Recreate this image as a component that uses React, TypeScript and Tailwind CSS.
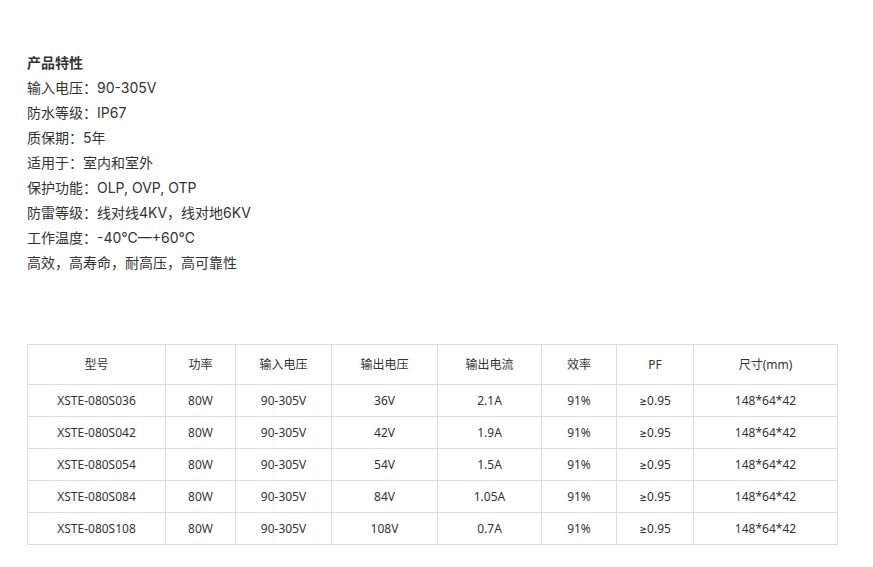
import React from "react";

const lines = [
  "输入电压：90-305V",
  "防水等级：IP67",
  "质保期：5年",
  "适用于：室内和室外",
  "保护功能：OLP, OVP, OTP",
  "防雷等级：线对线4KV，线对地6KV",
  "工作温度：-40℃—+60℃",
  "高效，高寿命，耐高压，高可靠性",
];

const headers = ["型号", "功率", "输入电压", "输出电压", "输出电流", "效率", "PF", "尺寸(mm)"];
const widths = [138, 70, 96, 106, 104, 75, 77, 144];
const rows = [
  ["XSTE-080S036", "80W", "90-305V", "36V", "2.1A", "91%", "≥0.95", "148*64*42"],
  ["XSTE-080S042", "80W", "90-305V", "42V", "1.9A", "91%", "≥0.95", "148*64*42"],
  ["XSTE-080S054", "80W", "90-305V", "54V", "1.5A", "91%", "≥0.95", "148*64*42"],
  ["XSTE-080S084", "80W", "90-305V", "84V", "1.05A", "91%", "≥0.95", "148*64*42"],
  ["XSTE-080S108", "80W", "90-305V", "108V", "0.7A", "91%", "≥0.95", "148*64*42"],
];

export default function App() {
  return (
    <div
      className="w-[873px] h-[567px] bg-white text-[#333] pl-[27px] pt-[50px]"
      style={{ fontFamily: '"Noto Sans", Inter, "Noto Sans CJK SC", sans-serif' }}
    >
      <div
        className="text-[14px] leading-[25px]"
        style={{ fontFamily: 'Inter, "Noto Sans CJK SC", sans-serif' }}
      >
        <div className="font-bold">产品特性</div>
        {lines.map((l) => (
          <div key={l}>{l}</div>
        ))}
      </div>
      <table className="mt-[69px] border-collapse text-[12px] table-fixed w-[810px]">
        <colgroup>
          {widths.map((w, i) => (
            <col key={i} style={{ width: w }} />
          ))}
        </colgroup>
        <thead>
          <tr className="h-[40px]">
            {headers.map((h) => (
              <th key={h} className="border border-[#ddd] font-normal text-center p-0">
                {h}
              </th>
            ))}
          </tr>
        </thead>
        <tbody>
          {rows.map((r) => (
            <tr key={r[0]} className="h-[32px]">
              {r.map((c, i) => (
                <td key={i} className="border border-[#ddd] text-center p-0">
                  {c}
                </td>
              ))}
            </tr>
          ))}
        </tbody>
      </table>
    </div>
  );
}
